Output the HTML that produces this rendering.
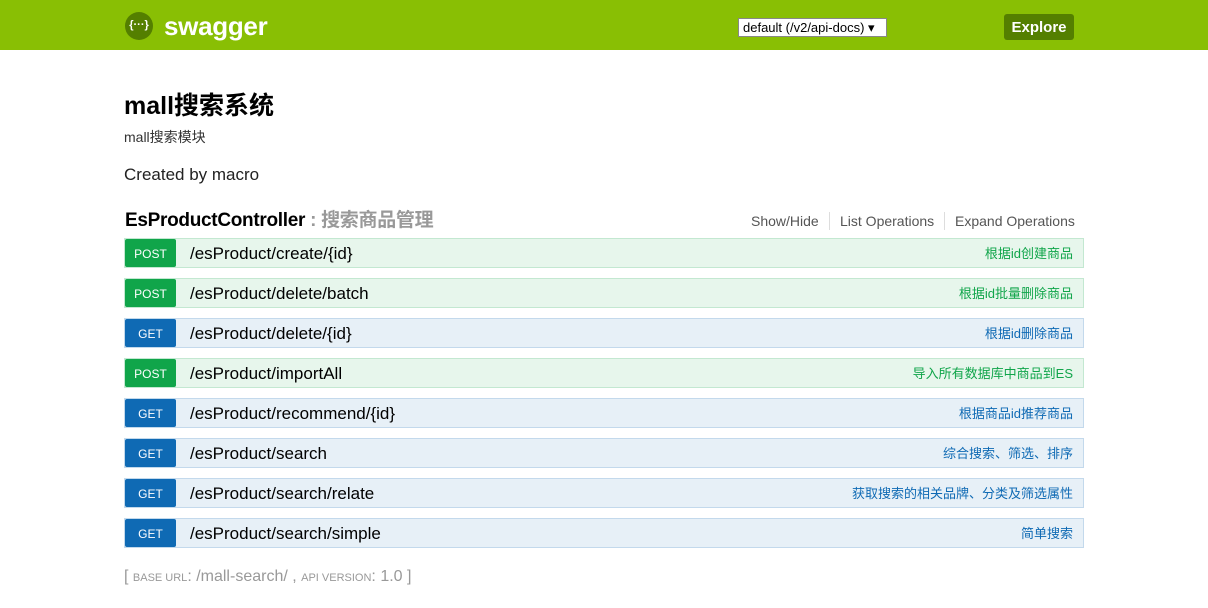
<!DOCTYPE html>
<html><head><meta charset="utf-8"><style>
*{box-sizing:border-box;margin:0;padding:0}
body{width:1208px;height:608px;background:#fff;font-family:"Liberation Sans","Noto Sans CJK SC",sans-serif;color:#000;overflow:hidden;position:relative}
.hdr{position:absolute;left:0;top:0;width:1208px;height:50px;background:#89bf04}
.logo{position:absolute;left:125px;top:12px;width:28px;height:28px;border-radius:50%;background:#547f00;color:#fff;font-size:11px;font-weight:bold;text-align:center;line-height:27px}
.sw{position:absolute;left:164px;top:11px;color:#fff;font-size:26px;font-weight:bold;letter-spacing:-0.3px}
.sel{position:absolute;left:738px;top:18px;width:149px;height:19px;background:#fff;border:1px solid #888;font-size:13px;line-height:17px;padding-left:4px;color:#000}
.exp{position:absolute;left:1004px;top:14px;width:70px;height:26px;background:#547f00;border-radius:3px;color:#fff;font-weight:bold;font-size:15px;text-align:center;line-height:27px}
.abs{position:absolute}
.row{position:absolute;left:124px;width:960px;height:30px;border:1px solid}
.post{background:#e7f6ec;border-color:#c3e8d1}
.get{background:#e7f0f7;border-color:#c3d9ec}
.b{position:absolute;left:0;top:0;width:51px;height:28px;color:#fff;font-size:12px;text-align:center;line-height:30px;border-radius:2px}
.post .b{background:#10a54a}.get .b{background:#0f6ab4}
.p{position:absolute;left:65px;top:5px;font-size:17px;color:#000}
.s{position:absolute;right:10px;top:4px;font-size:13px}
.post .s{color:#10a54a}.get .s{color:#0f6ab4}
.ops{position:absolute;top:213px;font-size:14px;color:#555}
.sep{position:absolute;top:212px;width:1px;height:18px;background:#ddd}
</style></head><body>
<div class="hdr"><div class="logo">{···}</div><div class="sw">swagger</div>
<div class="sel">default (/v2/api-docs) ▾</div><div class="exp">Explore</div></div>
<div class="abs" style="left:124px;top:86px;font-size:25px;font-weight:bold">mall搜索系统</div>
<div class="abs" style="left:124px;top:127px;font-size:14px;color:#333">mall搜索模块</div>
<div class="abs" style="left:124px;top:165px;font-size:17px;color:#222">Created by macro</div>
<div class="abs" style="left:125px;top:205px;font-size:19px;font-weight:bold;letter-spacing:-0.3px">EsProductController<span style="color:#999"> : 搜索商品管理</span></div>
<div class="ops" style="left:751px">Show/Hide</div><div class="sep" style="left:829px"></div>
<div class="ops" style="left:840px">List Operations</div><div class="sep" style="left:944px"></div>
<div class="ops" style="left:955px">Expand Operations</div>
<div class="row post" style="top:238px"><div class="b">POST</div><div class="p">/esProduct/create/{id}</div><div class="s">根据id创建商品</div></div>
<div class="row post" style="top:278px"><div class="b">POST</div><div class="p">/esProduct/delete/batch</div><div class="s">根据id批量删除商品</div></div>
<div class="row get" style="top:318px"><div class="b">GET</div><div class="p">/esProduct/delete/{id}</div><div class="s">根据id删除商品</div></div>
<div class="row post" style="top:358px"><div class="b">POST</div><div class="p">/esProduct/importAll</div><div class="s">导入所有数据库中商品到ES</div></div>
<div class="row get" style="top:398px"><div class="b">GET</div><div class="p">/esProduct/recommend/{id}</div><div class="s">根据商品id推荐商品</div></div>
<div class="row get" style="top:438px"><div class="b">GET</div><div class="p">/esProduct/search</div><div class="s">综合搜索、筛选、排序</div></div>
<div class="row get" style="top:478px"><div class="b">GET</div><div class="p">/esProduct/search/relate</div><div class="s">获取搜索的相关品牌、分类及筛选属性</div></div>
<div class="row get" style="top:518px"><div class="b">GET</div><div class="p">/esProduct/search/simple</div><div class="s">简单搜索</div></div>
<div class="abs" style="left:124px;top:568px;font-size:16px;color:#999">[ <span style="font-size:11px">BASE URL</span>: /mall-search/ , <span style="font-size:11px">API VERSION</span>: 1.0 ]</div>
</body></html>
